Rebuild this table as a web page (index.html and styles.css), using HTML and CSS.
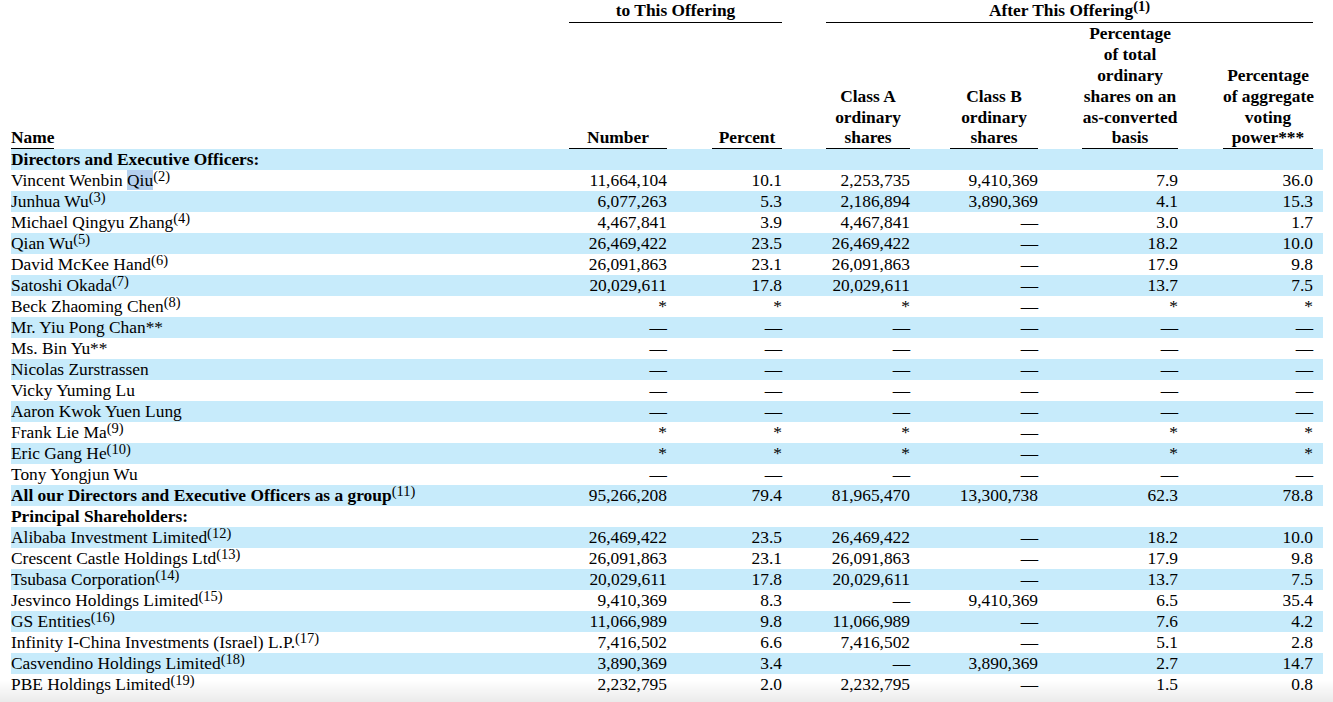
FILE: index.html
```html
<!doctype html>
<html>
    <head>
        <meta charset="UTF-8" />
        <meta name="viewport" content="width=device-width" />
        <title>Principal Shareholders</title>
        <link rel="stylesheet" href="styles.css">
    </head>
    <body>
        <table class="holders">
            <colgroup>
                <col class="w-name" />
                <col class="w-num" />
                <col class="w-pct" />
                <col class="w-a" />
                <col class="w-b" />
                <col class="w-tot" />
                <col class="w-vote" />
            </colgroup>
            <thead>
                <tr class="groupRow">
                    <th></th>
                    <th colspan="2" class="groupPrior"><div class="rule">to This Offering</div></th>
                    <th colspan="4" class="groupAfter"><div class="rule">After This Offering<sup>(1)</sup></div></th>
                </tr>
                <tr class="headRow">
                    <th class="nameHead"><span class="rule">Name</span></th>
                    <th><div class="rule">Number</div></th>
                    <th><div class="rule">Percent</div></th>
                    <th><div class="rule">Class A<br />ordinary<br />shares</div></th>
                    <th><div class="rule">Class B<br />ordinary<br />shares</div></th>
                    <th><div class="rule">Percentage<br />of total<br />ordinary<br />shares on an<br />as-converted<br />basis</div></th>
                    <th><div class="rule">Percentage<br />of aggregate<br />voting<br />power***</div></th>
                </tr>
            </thead>
            <tbody>
                <tr><td class="label">Directors and Executive Officers:</td><td></td><td></td><td></td><td></td><td></td><td></td></tr>
                <tr><td>Vincent Wenbin <span class="sel">Qiu</span><sup>(2)</sup></td><td>11,664,104</td><td>10.1</td><td>2,253,735</td><td>9,410,369</td><td>7.9</td><td>36.0</td></tr>
                <tr><td>Junhua Wu<sup>(3)</sup></td><td>6,077,263</td><td>5.3</td><td>2,186,894</td><td>3,890,369</td><td>4.1</td><td>15.3</td></tr>
                <tr><td>Michael Qingyu Zhang<sup>(4)</sup></td><td>4,467,841</td><td>3.9</td><td>4,467,841</td><td>&mdash;</td><td>3.0</td><td>1.7</td></tr>
                <tr><td>Qian Wu<sup>(5)</sup></td><td>26,469,422</td><td>23.5</td><td>26,469,422</td><td>&mdash;</td><td>18.2</td><td>10.0</td></tr>
                <tr><td>David McKee Hand<sup>(6)</sup></td><td>26,091,863</td><td>23.1</td><td>26,091,863</td><td>&mdash;</td><td>17.9</td><td>9.8</td></tr>
                <tr><td>Satoshi Okada<sup>(7)</sup></td><td>20,029,611</td><td>17.8</td><td>20,029,611</td><td>&mdash;</td><td>13.7</td><td>7.5</td></tr>
                <tr><td>Beck Zhaoming Chen<sup>(8)</sup></td><td>*</td><td>*</td><td>*</td><td>&mdash;</td><td>*</td><td>*</td></tr>
                <tr><td>Mr. Yiu Pong Chan**</td><td>&mdash;</td><td>&mdash;</td><td>&mdash;</td><td>&mdash;</td><td>&mdash;</td><td>&mdash;</td></tr>
                <tr><td>Ms. Bin Yu**</td><td>&mdash;</td><td>&mdash;</td><td>&mdash;</td><td>&mdash;</td><td>&mdash;</td><td>&mdash;</td></tr>
                <tr><td>Nicolas Zurstrassen</td><td>&mdash;</td><td>&mdash;</td><td>&mdash;</td><td>&mdash;</td><td>&mdash;</td><td>&mdash;</td></tr>
                <tr><td>Vicky Yuming Lu</td><td>&mdash;</td><td>&mdash;</td><td>&mdash;</td><td>&mdash;</td><td>&mdash;</td><td>&mdash;</td></tr>
                <tr><td>Aaron Kwok Yuen Lung</td><td>&mdash;</td><td>&mdash;</td><td>&mdash;</td><td>&mdash;</td><td>&mdash;</td><td>&mdash;</td></tr>
                <tr><td>Frank Lie Ma<sup>(9)</sup></td><td>*</td><td>*</td><td>*</td><td>&mdash;</td><td>*</td><td>*</td></tr>
                <tr><td>Eric Gang He<sup>(10)</sup></td><td>*</td><td>*</td><td>*</td><td>&mdash;</td><td>*</td><td>*</td></tr>
                <tr><td>Tony Yongjun Wu</td><td>&mdash;</td><td>&mdash;</td><td>&mdash;</td><td>&mdash;</td><td>&mdash;</td><td>&mdash;</td></tr>
                <tr><td class="label">All our Directors and Executive Officers as a group<sup>(11)</sup></td><td>95,266,208</td><td>79.4</td><td>81,965,470</td><td>13,300,738</td><td>62.3</td><td>78.8</td></tr>
                <tr><td class="label">Principal Shareholders:</td><td></td><td></td><td></td><td></td><td></td><td></td></tr>
                <tr><td>Alibaba Investment Limited<sup>(12)</sup></td><td>26,469,422</td><td>23.5</td><td>26,469,422</td><td>&mdash;</td><td>18.2</td><td>10.0</td></tr>
                <tr><td>Crescent Castle Holdings Ltd<sup>(13)</sup></td><td>26,091,863</td><td>23.1</td><td>26,091,863</td><td>&mdash;</td><td>17.9</td><td>9.8</td></tr>
                <tr><td>Tsubasa Corporation<sup>(14)</sup></td><td>20,029,611</td><td>17.8</td><td>20,029,611</td><td>&mdash;</td><td>13.7</td><td>7.5</td></tr>
                <tr><td>Jesvinco Holdings Limited<sup>(15)</sup></td><td>9,410,369</td><td>8.3</td><td>&mdash;</td><td>9,410,369</td><td>6.5</td><td>35.4</td></tr>
                <tr><td>GS Entities<sup>(16)</sup></td><td>11,066,989</td><td>9.8</td><td>11,066,989</td><td>&mdash;</td><td>7.6</td><td>4.2</td></tr>
                <tr><td>Infinity I-China Investments (Israel) L.P.<sup>(17)</sup></td><td>7,416,502</td><td>6.6</td><td>7,416,502</td><td>&mdash;</td><td>5.1</td><td>2.8</td></tr>
                <tr><td>Casvendino Holdings Limited<sup>(18)</sup></td><td>3,890,369</td><td>3.4</td><td>&mdash;</td><td>3,890,369</td><td>2.7</td><td>14.7</td></tr>
                <tr><td>PBE Holdings Limited<sup>(19)</sup></td><td>2,232,795</td><td>2.0</td><td>2,232,795</td><td>&mdash;</td><td>1.5</td><td>0.8</td></tr>
            </tbody>
        </table>
        <div class="fade"></div>
    </body>
</html>
```

FILE: styles.css
```css
html,
body {
    background-color: #fff;
    color: #000;
}
body {
    margin: 0 0 0 11px;
    font-family: "Liberation Serif", "Times New Roman", serif;
    font-size: 17.4px;
    line-height: 20.9px;
}
.holders {
    width: 1312px;
    table-layout: fixed;
    border-collapse: separate;
    border-spacing: 0;
}
.w-name {
    width: 514px;
}
.w-num {
    width: 142px;
}
.w-pct {
    width: 115px;
}
.w-a {
    width: 128px;
}
.w-b {
    width: 128px;
}
.w-tot {
    width: 140px;
}
.w-vote {
    width: 145px;
}
th,
td {
    padding: 0;
    white-space: nowrap;
}
th {
    font-weight: bold;
    text-align: center;
    vertical-align: bottom;
}
.rule {
    border-bottom: 1px solid #000;
}
.groupRow .rule {
    padding-bottom: 1px;
}
.groupPrior {
    padding-left: 44px;
}
.groupAfter {
    padding-left: 44px;
    padding-right: 10px;
}
.nameHead {
    text-align: left;
}
.nameHead .rule {
    display: inline-block;
}
/* column gutters, shared by the heading row and the data rows */
.headRow th:nth-child(2),
tbody td:nth-child(2) {
    padding-left: 44px;
}
.headRow th:nth-child(3),
tbody td:nth-child(3) {
    padding-left: 45px;
}
.headRow th:nth-child(4),
tbody td:nth-child(4) {
    padding-left: 44px;
}
.headRow th:nth-child(5),
tbody td:nth-child(5) {
    padding-left: 40px;
}
.headRow th:nth-child(6),
tbody td:nth-child(6) {
    padding-left: 44px;
}
.headRow th:nth-child(7),
tbody td:nth-child(7) {
    padding-left: 45px;
    padding-right: 10px;
}
tbody td {
    height: 20.98px;
    line-height: 20.98px;
    text-align: right;
    vertical-align: top;
}
tbody td:first-child {
    text-align: left;
}
tbody tr:nth-child(odd) {
    background-color: #c7ebfb;
}
.label {
    font-weight: bold;
}
.label sup {
    font-weight: normal;
}
th sup {
    font-weight: bold;
}
sup {
    font-size: 14.5px;
    line-height: 0;
    vertical-align: 5.5px;
}
.sel {
    background-color: #b5d0ee;
}
.fade {
    position: fixed;
    left: 0;
    right: 0;
    bottom: 0;
    height: 22px;
    pointer-events: none;
    background: linear-gradient(rgba(0, 0, 0, 0), rgba(0, 0, 0, 0.08));
}
```
